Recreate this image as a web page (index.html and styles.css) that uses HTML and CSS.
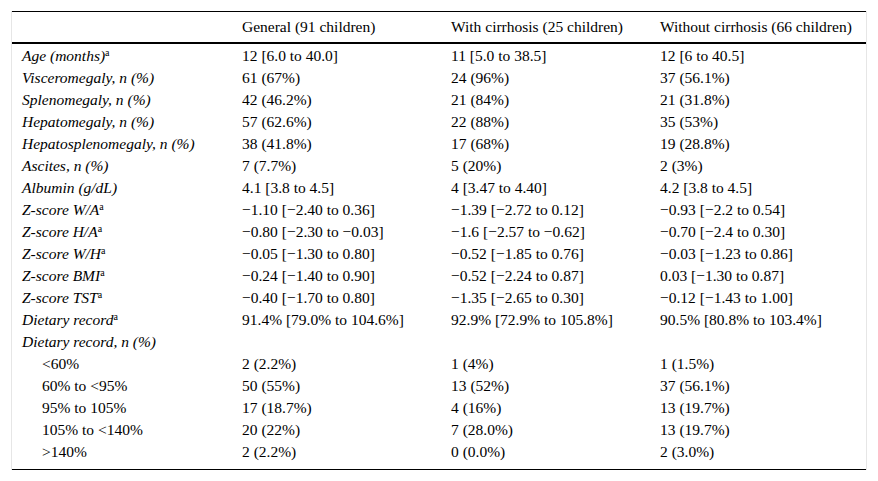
FILE: index.html
```html
<!DOCTYPE html>
<html>
<head>
<meta charset="utf-8">
<link rel="stylesheet" href="styles.css">
</head>
<body>
<div class="frame">
<table class="data">
<colgroup>
<col class="c1"><col class="c2"><col class="c3"><col class="c4">
</colgroup>
<thead>
<tr><th></th><th>General (91 children)</th><th>With cirrhosis (25 children)</th><th>Without cirrhosis (66 children)</th></tr>
</thead>
<tbody>
<tr><td><i>Age (months)</i><sup>a</sup></td><td>12 [6.0 to 40.0]</td><td>11 [5.0 to 38.5]</td><td>12 [6 to 40.5]</td></tr>
<tr><td><i>Visceromegaly, n (%)</i></td><td>61 (67%)</td><td>24 (96%)</td><td>37 (56.1%)</td></tr>
<tr><td><i>Splenomegaly, n (%)</i></td><td>42 (46.2%)</td><td>21 (84%)</td><td>21 (31.8%)</td></tr>
<tr><td><i>Hepatomegaly, n (%)</i></td><td>57 (62.6%)</td><td>22 (88%)</td><td>35 (53%)</td></tr>
<tr><td><i>Hepatosplenomegaly, n (%)</i></td><td>38 (41.8%)</td><td>17 (68%)</td><td>19 (28.8%)</td></tr>
<tr><td><i>Ascites, n (%)</i></td><td>7 (7.7%)</td><td>5 (20%)</td><td>2 (3%)</td></tr>
<tr><td><i>Albumin (g/dL)</i></td><td>4.1 [3.8 to 4.5]</td><td>4 [3.47 to 4.40]</td><td>4.2 [3.8 to 4.5]</td></tr>
<tr><td><i>Z-score W/A</i><sup>a</sup></td><td>−1.10 [−2.40 to 0.36]</td><td>−1.39 [−2.72 to 0.12]</td><td>−0.93 [−2.2 to 0.54]</td></tr>
<tr><td><i>Z-score H/A</i><sup>a</sup></td><td>−0.80 [−2.30 to −0.03]</td><td>−1.6 [−2.57 to −0.62]</td><td>−0.70 [−2.4 to 0.30]</td></tr>
<tr><td><i>Z-score W/H</i><sup>a</sup></td><td>−0.05 [−1.30 to 0.80]</td><td>−0.52 [−1.85 to 0.76]</td><td>−0.03 [−1.23 to 0.86]</td></tr>
<tr><td><i>Z-score BMI</i><sup>a</sup></td><td>−0.24 [−1.40 to 0.90]</td><td>−0.52 [−2.24 to 0.87]</td><td>0.03 [−1.30 to 0.87]</td></tr>
<tr><td><i>Z-score TST</i><sup>a</sup></td><td>−0.40 [−1.70 to 0.80]</td><td>−1.35 [−2.65 to 0.30]</td><td>−0.12 [−1.43 to 1.00]</td></tr>
<tr><td><i>Dietary record</i><sup>a</sup></td><td>91.4% [79.0% to 104.6%]</td><td>92.9% [72.9% to 105.8%]</td><td>90.5% [80.8% to 103.4%]</td></tr>
<tr><td><i>Dietary record, n (%)</i></td><td></td><td></td><td></td></tr>
<tr><td class="sub">&lt;60%</td><td>2 (2.2%)</td><td>1 (4%)</td><td>1 (1.5%)</td></tr>
<tr><td class="sub">60% to &lt;95%</td><td>50 (55%)</td><td>13 (52%)</td><td>37 (56.1%)</td></tr>
<tr><td class="sub">95% to 105%</td><td>17 (18.7%)</td><td>4 (16%)</td><td>13 (19.7%)</td></tr>
<tr><td class="sub">105% to &lt;140%</td><td>20 (22%)</td><td>7 (28.0%)</td><td>13 (19.7%)</td></tr>
<tr><td class="sub">&gt;140%</td><td>2 (2.2%)</td><td>0 (0.0%)</td><td>2 (3.0%)</td></tr>
</tbody>
</table>
</div>
</body>
</html>
```
FILE: styles.css
```css
html, body {
  margin: 0;
  padding: 0;
  background: #fff;
}
body {
  padding: 11px 11px 0 11px;
  font-family: "Liberation Serif", "Times New Roman", Times, serif;
  font-size: 15.5px;
  color: #000;
}
.frame {
  width: 856px;
  border-left: 1px solid #e6e6e6;
  border-right: 1px solid #e6e6e6;
  box-sizing: border-box;
}
.data {
  width: 100%;
  border-collapse: collapse;
  table-layout: fixed;
  border-top: 1px solid #000;
  border-bottom: 1px solid #000;
}
.c1 { width: 220px; }
.c2 { width: 209px; }
.c3 { width: 209px; }
.c4 { width: 216px; }
th {
  font-weight: normal;
  text-align: left;
  height: 30px;
  padding: 0 0 0 10px;
  border-bottom: 2px solid #000;
  vertical-align: middle;
  white-space: nowrap;
}
td {
  height: 22px;
  padding: 0 0 0 10px;
  vertical-align: middle;
  white-space: nowrap;
  line-height: 17px;
}
tbody tr:last-child td {
  height: 26px;
  vertical-align: top;
  padding-top: 3px;
}
td.sub {
  padding-left: 30px;
}
sup {
  font-size: 10px;
  line-height: 0;
  vertical-align: 5px;
}
```
